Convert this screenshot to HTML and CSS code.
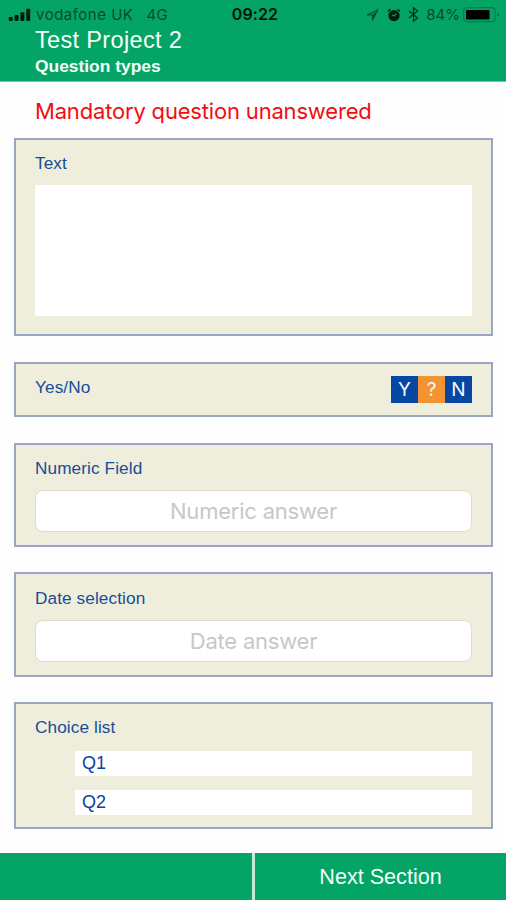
FILE: index.html
```html
<!DOCTYPE html>
<html lang="en">
<head>
<meta charset="utf-8">
<title>Test Project 2</title>
<link rel="stylesheet" href="styles.css">
</head>
<body>
<div class="app">
  <header class="header">
    <div class="status">
      <div class="status-left">
        <svg class="signal" width="24" height="14" viewBox="0 0 24 14"><rect x="0.8" y="9" width="4" height="4" rx="1"/><rect x="6.6" y="7" width="4" height="6" rx="1"/><rect x="12.4" y="4.3" width="4" height="8.7" rx="1"/><rect x="18.2" y="0.8" width="4" height="12.2" rx="1"/></svg>
        <span class="carrier">vodafone UK</span>
        <span class="network">4G</span>
      </div>
      <span class="clock">09:22</span>
      <div class="status-right">
        <svg class="locate" width="13" height="12" viewBox="0 0 13 12"><path d="M12 .7 1 5.9h5.4v5.4z" fill="none" stroke="#064a31" stroke-width="1"/><path d="M12 .7 6.4 5.9v5.4z" fill="#064a31"/></svg>
        <svg class="alarm" width="14" height="14" viewBox="0 0 14 14"><circle cx="7" cy="7.6" r="5.6" fill="#001c10"/><path d="M9.4 5.6 7 8 5 6.8" fill="none" stroke="#03a466" stroke-width="1.2"/><path d="M1 3.5 3.4 1.2M13 3.5 10.6 1.2" stroke="#001c10" stroke-width="1.5"/></svg>
        <svg class="bluetooth" width="11" height="15" viewBox="0 0 11 15"><path d="M1 4l8.5 7-4 3.2V.8l4 3.2L1 11" fill="none" stroke="#03331f" stroke-width="1.3"/></svg>
        <span class="percent">84%</span>
        <svg class="battery" width="37" height="16" viewBox="0 0 37 16"><rect x=".7" y=".7" width="31.6" height="14" rx="3.5" fill="none" stroke="#087a4e" stroke-width="1.2"/><rect x="3" y="3" width="23.5" height="9.6" rx="1" fill="#000"/><path d="M34 5.5c2.7.8 2.7 3.6 0 4.4z" fill="#087a4e"/></svg>
      </div>
    </div>
    <h1 class="title">Test Project 2</h1>
    <h2 class="subtitle">Question types</h2>
  </header>
  <main class="main">
    <p class="warning">Mandatory question unanswered</p>
    <section class="card card-text">
      <label class="label" for="text">Text</label>
      <textarea class="textarea" id="text"></textarea>
    </section>
    <section class="card card-bool">
      <span class="label">Yes/No</span>
      <div class="toggle"><span class="option">Y</span><span class="option unknown">?</span><span class="option">N</span></div>
    </section>
    <section class="card card-field">
      <span class="label">Numeric Field</span>
      <div class="field"><span class="numeric-hint">Numeric answer</span></div>
    </section>
    <section class="card card-field card-date">
      <span class="label">Date selection</span>
      <div class="field"><span class="date-hint">Date answer</span></div>
    </section>
    <section class="card card-choice">
      <span class="label">Choice list</span>
      <ul class="choices"><li class="choice">Q1</li><li class="choice">Q2</li></ul>
    </section>
  </main>
  <footer class="footer"><div class="nav"></div><div class="nav">Next Section</div></footer>
</div>
</body>
</html>
```
FILE: styles.css
```css
* { box-sizing: border-box; }
body { margin: 0; background: #fefefe; font-family: "Liberation Sans", Arial, sans-serif; }
h1, h2, p, ul { margin: 0; padding: 0; }
svg { display: block; flex: none; }
span { white-space: nowrap; }
.app { width: 506px; height: 900px; display: flex; flex-direction: column; overflow: hidden; }

.header { height: 82px; background: #03a466; border-bottom: 1px solid #6cc9a3; color: #f3fff8; flex: none; }
.status { height: 28px; padding: 1px 6px 0 8px; display: grid; grid-template-columns: 1fr auto 1fr; align-items: center; font: 15px/27px Inter, sans-serif; color: #064a31; }
.status-left { display: flex; align-items: center; }
.signal { fill: #001c10; margin-right: 4px; }
.carrier { letter-spacing: 0.5px; }
.network { margin-left: 13px; letter-spacing: 0.3px; }
.clock { font-weight: 600; font-size: 16px; color: #00150b; letter-spacing: 0.1px; margin-left: 2px; }
.status-right { display: flex; align-items: center; justify-content: flex-end; }
.alarm { margin-left: 8px; }
.bluetooth { margin-left: 7px; }
.percent { margin-left: 7px; letter-spacing: 0; }
.battery { margin-left: 3px; }
.title { margin: -2px 0 0 35px; font-size: 23.6px; line-height: 28px; font-weight: 400; letter-spacing: 0.3px; }
.subtitle { margin: 0 0 0 35px; font-size: 17.4px; line-height: 25px; font-weight: 700; }

.main { flex: 1; padding: 0 13px 0 14px; }
.warning { height: 56px; padding-left: 21px; font: 22px/58px Inter, sans-serif; letter-spacing: -0.18px; color: #f20d12; white-space: nowrap; }
.card { border: 2px solid #9ba6c6; background: #efeedd; padding: 0 19px; color: #164d94; }
.label { display: block; font-size: 17.2px; line-height: 20px; letter-spacing: 0.1px; }
.card-text { height: 198px; padding-top: 13px; margin-bottom: 26px; }
.textarea { display: block; width: 100%; height: 131px; margin-top: 12px; border: 0; background: #fff; resize: none; }
.card-bool { height: 55px; margin-bottom: 26px; display: flex; justify-content: space-between; align-items: flex-start; padding-top: 12px; }
.card-bool .label { padding-top: 1px; }
.toggle { display: flex; height: 27px; color: #f4f8ff; font: 19px/27px Inter, sans-serif; }
.option { width: 27px; background: #0647a2; text-align: center; }
.option.unknown { background: #f39332; }
.card-field { height: 104px; margin-bottom: 25px; padding-top: 13px; }
.field { height: 42px; margin-top: 12px; border: 1px solid #dedccd; border-radius: 8px; background: #fff; text-align: center; font: 22px/41px Inter, sans-serif; letter-spacing: -0.22px; color: #c7c7cb; }
.card-date { height: 105px; padding-top: 14px; }
.card-choice { height: 127px; padding-top: 13px; }
.choices { list-style: none; margin: 14px 0 0 40px; display: grid; gap: 14px; }
.choice { height: 25px; padding-left: 7px; background: #fff; font-size: 18px; line-height: 25px; color: #0c409a; }

.footer { flex: none; height: 47px; display: grid; grid-template-columns: 252px 251px; gap: 3px; background: #c6e8d7; }
.nav { background: #03a466; color: #f1fff7; font-size: 21.6px; line-height: 48px; text-align: center; }
```
